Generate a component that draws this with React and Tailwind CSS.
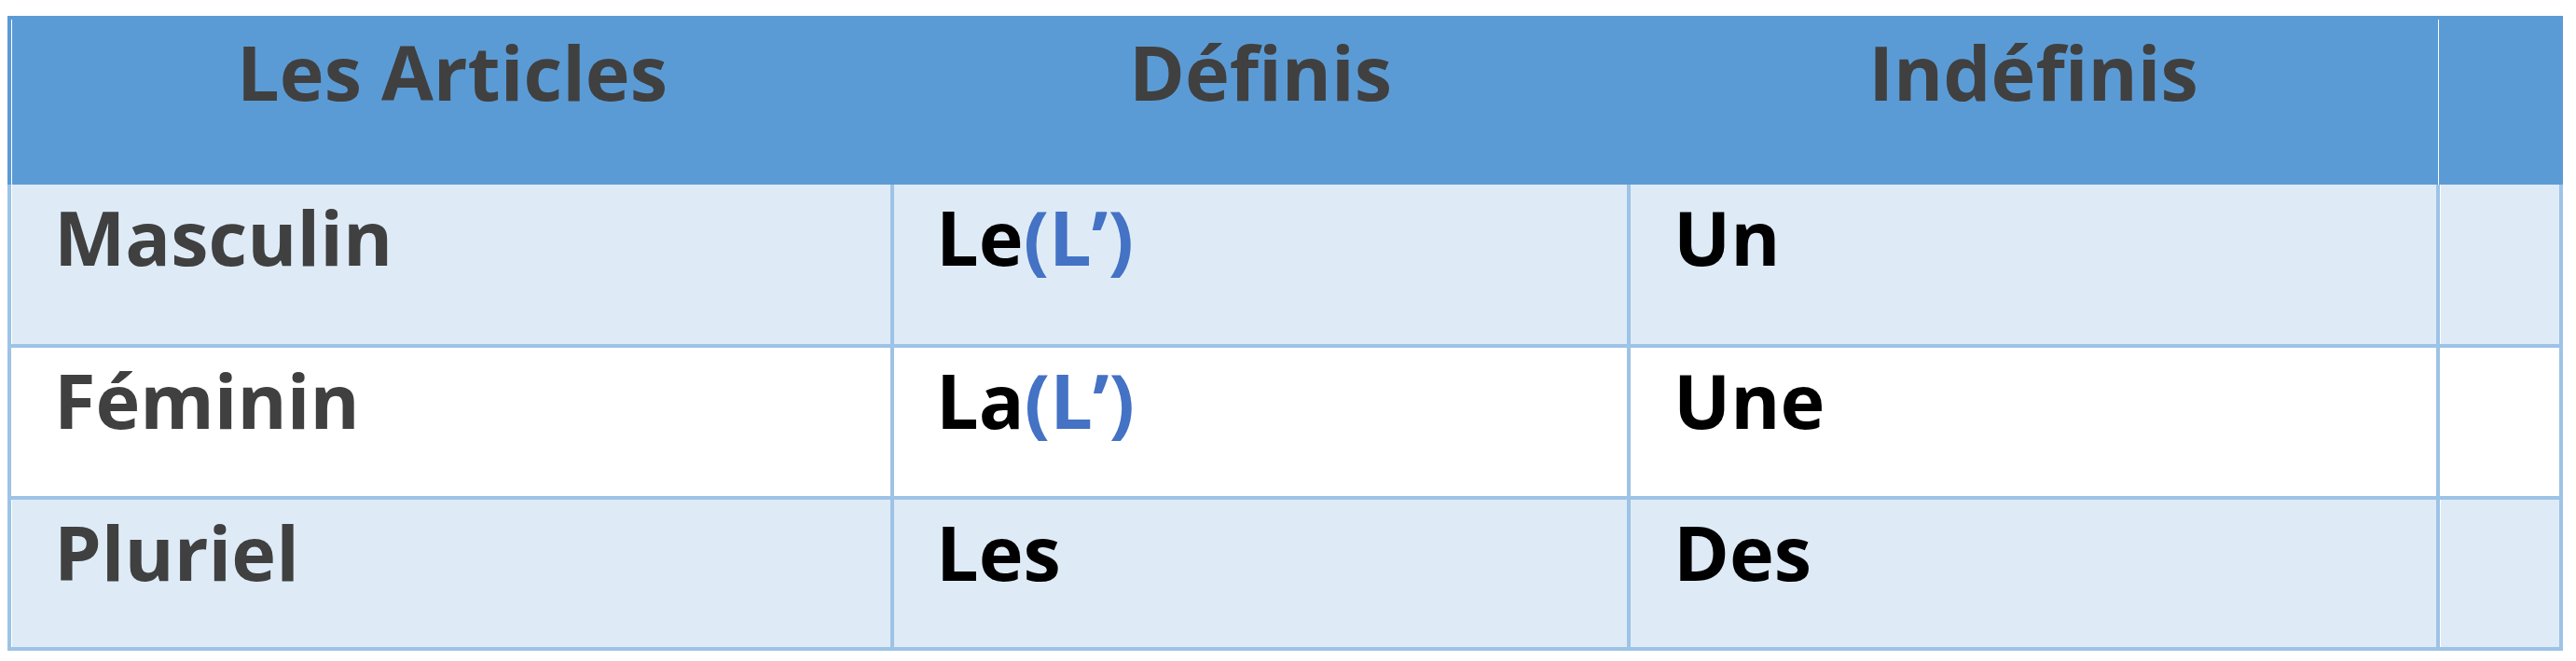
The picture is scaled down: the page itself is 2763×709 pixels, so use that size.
import React from "react";

const B = "bg-[#9dc3e6]";

function Row({ h, bg, c1, c2, c3 }) {
  return (
    <div className={`flex ${bg} border-b-4 border-[#9dc3e6]`}>
      <div className={`w-[4px] ${B}`} />
      <div className="w-[1px] bg-white" />
      <div className={`w-[942px] ${h} pl-[45px] pt-[15px] text-[#404040]`}>{c1}</div>
      <div className={`w-[4px] ${B}`} />
      <div className="w-[786px] pl-[45px] pt-[15px] text-black">{c2}</div>
      <div className={`w-[4px] ${B}`} />
      <div className="w-[864px] pl-[46px] pt-[15px] text-black">{c3}</div>
      <div className={`w-[4px] ${B}`} />
      <div className="w-[1px] bg-white" />
      <div className="w-[127px]" />
      <div className={`w-[4px] ${B}`} />
    </div>
  );
}

export default function App() {
  return (
    <div className="w-[2763px] h-[709px] bg-white pt-[17px] pl-[8px] font-['Open_Sans',sans-serif] font-bold text-[81px] leading-none">
      <div className="w-[2741px] flex flex-col">
        <div className="flex h-[181px] bg-[#5b9bd5] text-[#404040]">
          <div className="w-[4px]" />
          <div className="w-[1px] mt-[4px] bg-white" />
          <div className="w-[944px] pt-[19px] text-center">Les Articles</div>
          <div className="w-[790px] pt-[19px] text-center">Définis</div>
          <div className="w-[868px] pt-[19px] text-center">Indéfinis</div>
          <div className="w-[1px] mt-[4px] bg-white" />
          <div className="w-[133px]" />
        </div>
        <Row
          h="h-[171px]"
          bg="bg-[#deebf7]"
          c1="Masculin"
          c2={<span>Le<span className="text-[#4472c4]">(L’)</span></span>}
          c3="Un"
        />
        <Row
          h="h-[159px]"
          bg="bg-white"
          c1="Féminin"
          c2={<span>La<span className="text-[#4472c4]">(L’)</span></span>}
          c3="Une"
        />
        <Row
          h="h-[158px]"
          bg="bg-[#deebf7]"
          c1="Pluriel"
          c2="Les"
          c3="Des"
        />
      </div>
    </div>
  );
}
